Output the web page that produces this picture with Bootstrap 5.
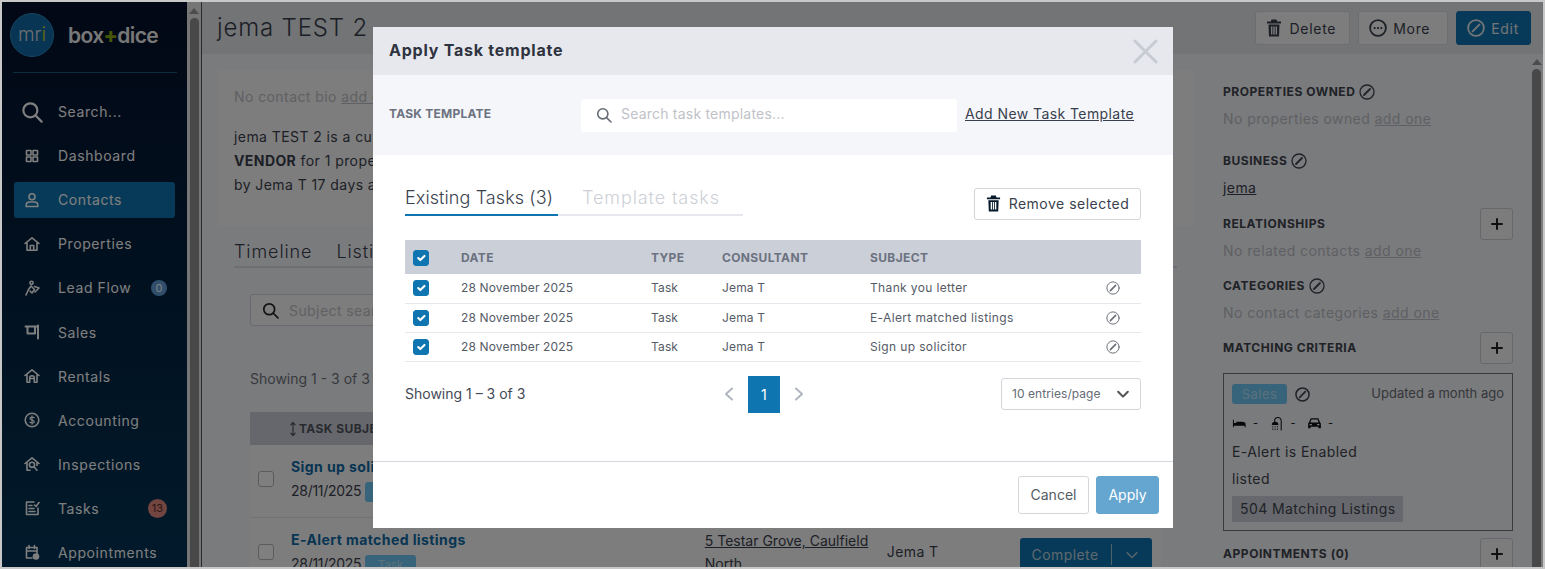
<!DOCTYPE html>
<html lang="en">
<head>
  <meta charset="UTF-8">
  <meta name="viewport" content="width=device-width, initial-scale=1.0">
  <title>Apply Task template</title>
  <link href="https://cdn.jsdelivr.net/npm/bootstrap@5.3.5/dist/css/bootstrap.min.css" rel="stylesheet">
  <script src="https://cdn.jsdelivr.net/npm/bootstrap@5.3.5/dist/js/bootstrap.bundle.min.js"></script>
  <style>
    html, body { height: 100%; overflow: hidden; }
    body { font-family: Inter, "Liberation Sans", sans-serif; font-size: 14px; color: #3a3f4e; letter-spacing: .03em; background: #f5f6fa; }
    a { color: inherit; }
    .ico { fill: none; stroke: currentColor; stroke-width: 1.6; stroke-linecap: round; stroke-linejoin: round; flex: none; }
    .ico-fill { fill: currentColor; stroke: none; }

    /* window frame stays bright over the backdrop */
    .win-frame { position: fixed; inset: 0; border: 2px solid #c8c8c8; z-index: 1060; pointer-events: none; }
    .app-shell { height: 100vh; padding: 2px; }

    /* sidebar */
    .side-bar { width: 185px; background: linear-gradient(#04102a, #023456); color: #fff; overflow: hidden; }
    .side-logo { height: 71px; margin: 0 10px 0 11px; padding-top: 11px; border-bottom: 1px solid #145a84; flex: none; }
    .mri-disc { width: 44px; height: 44px; margin-left: -3px; border-radius: 50%; background: #0f6ba6; border: 1px solid #2b88bd; color: #d8dfe4; font-size: 19px; font-weight: 300; letter-spacing: 0; line-height: 41px; text-align: center; }
    .mri-disc b { font-weight: 400; color: #a7c23a; }
    .word-mark { font-size: 21px; font-weight: 600; letter-spacing: -.03em; margin: 7px 0 0 14px; color: #f0f0f0; }
    .word-mark b { color: #8aa80f; font-weight: 800; }
    .side-nav { padding: 20.5px 12px 0; gap: 8px; flex-wrap: nowrap; }
    .side-link { height: 36.1px; padding: 0 8px 0 10px; border-radius: 3px; color: #fff; font-size: 14px; gap: 18px; letter-spacing: .043em; text-decoration: none; white-space: nowrap; }
    .side-link.is-current { background: #0f75b0; }
    .side-link .ico { width: 16px; height: 16px; }
    .side-link .ico-big { width: 22px; height: 22px; margin-left: -3px; margin-right: -3px; }
    .side-count { margin-left: auto; min-width: 16px; height: 16px; border-radius: 8px; background: #5f9fd8; font-size: 11px; line-height: 16px; text-align: center; letter-spacing: 0; }
    .side-count-red { background: #e58a80; min-width: 19px; height: 19px; border-radius: 10px; line-height: 19px; color: #5a2a2a; }

    /* fake scrollbars */
    .scroll-rail { background: #ececec; flex: none; align-items: center; }
    .scroll-rail i { display: block; width: 0; height: 0; border: 5px solid transparent; border-top: 0; border-bottom: 6px solid #999; }
    .scroll-rail u { display: block; flex: 1; width: 9px; background: #919191; border-radius: 5px 5px 0 0; text-decoration: none; }
    .rail-left { width: 15px; padding-top: 6px; gap: 4px; border-right: 1px solid #555; }
    .rail-right { width: 11px; padding-top: 5px; gap: 4px; background: #f5f6fa; align-items: flex-start; }

    /* main */
    .top-head { height: 52px; background: #e6e8ed; padding: 0 12px 0 15px; }
    .top-head h1 { font-size: 24px; font-weight: 300; margin: 0; letter-spacing: .035em; }
    .plain-btn { background: #fbfbfb; border: 1px solid #dcdde2; color: #3a3f4e; font-size: 14px; letter-spacing: .05em; height: 34px; padding: 0 13px 0 10px; border-radius: 3px; gap: 6px; }
    .plain-btn-wide { padding-right: 17px; }
    .trash-gap { gap: 8px; }
    .blue-btn { background: #0f75b0; border-color: #0f75b0; color: #e4e9ee; padding-right: 11px; }
    .body-split { height: 513px; overflow: hidden; }
    .left-col { width: 975px; margin: 16px 30px 0 16px; flex: none; }
    .right-col { width: 290px; margin-right: 19px; flex: none; padding-top: 30px; }

    .bio-box { height: 156px; background: #fbfbfb; padding: 15px 16px; line-height: 24px; }
    .bio-box p { margin: 0 0 16px; }
    .faint-txt { color: #bfc1c7; }
    .tab-line { margin: 12px 16px 0; height: 30px; border-bottom: 2px solid #dcdee4; font-size: 18px; font-weight: 300; letter-spacing: .05em; gap: 24px; }
    .search-strip { margin: 26px 32px 0; width: 400px; height: 32px; border: 1px solid #d3d5da; border-radius: 3px; padding: 0 11px; gap: 10px; color: #c0c2c8; background: #fbfbfb; }
    .count-txt { margin: 42px 32px 0; line-height: 22px; color: #70747e; letter-spacing: 0; }
    .task-grid { margin: 22px 32px 0 32px; }
    .task-head { height: 33px; background: #cbcfd8; font-size: 12px; font-weight: 700; color: #50555f; padding-left: 39px; gap: 2px; }
    .task-row { height: 72.5px; background: #fbfbfb; border-bottom: 1px solid #e4e5ea; padding: 0 0 3px 8px; }
    .task-box { width: 16px; height: 16px; border: 1px solid #b5b7bd; border-radius: 3px; background: #fff; margin-right: 17px; flex: none; }
    .task-name { color: #0f6ba6; font-weight: 700; font-size: 14px; line-height: 24px; letter-spacing: .03em; }
    .task-tag { display: inline-block; width: 51px; text-align: center; background: #6ec8f5; color: #b6e2f8; border-radius: 3px; font-size: 12px; line-height: 20px; }
    .task-meta { line-height: 24px; letter-spacing: -.02em; }
    .task-addr { width: 182px; margin-left: 239px; line-height: 23px; letter-spacing: 0; text-decoration: underline; align-self: flex-start; padding-top: 11px; }
    .task-done { width: 132px; height: 34px; background: #0f75b0; border-radius: 3px; color: #bcd2de; margin: 6px 0 0 81px; font-size: 14px; }
    .task-done em { font-style: normal; flex: 1; text-align: center; border-right: 1px solid #9cc; }
    .task-done .ico { margin: 0 13px; width: 14px; height: 14px; }

    .side-head { font-size: 12px; font-weight: 700; color: #40444f; gap: 4px; line-height: 16px; letter-spacing: .045em; }
    .side-head .ico { width: 16px; height: 16px; stroke-width: 1.3; }
    .side-line { line-height: 20px; margin: 9px 0 0; letter-spacing: .03em; }
    .side-group { margin-bottom: 24px; }
    .side-group-biz { margin-bottom: 10px; }
    .side-group-cat { margin: 17px 0 9px; }
    .side-head-tight { margin-bottom: 1px; }
    .plus-btn { width: 33px; height: 32px; border: 1px solid #cfd1d7; border-radius: 3px; background: #f8f8fa; color: #222; padding: 0; flex: none; }
    .match-box { border: 1px solid #74767c; height: 158px; padding: 10px 8px 0 8px; margin: 9px 0 7px; color: #40444f; }
    .sale-tag { width: 55px; height: 20px; border-radius: 3px; background: #6ec8f5; color: #b6e2f8; text-align: center; font-size: 13px; line-height: 20px; }
    .upd-txt { font-size: 13px; color: #6b6e76; letter-spacing: 0; }
    .spec-row { gap: 6px; height: 20px; margin-top: 9px; color: #111; font-size: 11px; }
    .spec-row .ico { width: 15px; height: 15px; }
    .spec-row span { margin-right: 5px; }
    .match-count { width: 171px; height: 26px; background: #cfd1da; line-height: 26px; padding-left: 8px; white-space: nowrap; }

    /* dialog */
    .task-dialog { max-width: 800px; width: 800px; margin: 27px 0 0 373px; }
    .task-dialog .modal-content { border: 0; border-radius: 0; height: 501px; }
    .dlg-head { height: 48px; background: #e6e8ed; padding: 0 15px 0 16px; border: 0; border-radius: 0; }
    .dlg-head h5 { font-size: 16px; font-weight: 700; margin: 0; padding-bottom: 2px; color: #2f3340; letter-spacing: .048em; }
    .close-x { color: #c7cbd2; line-height: 0; }
    .dlg-band { height: 80px; background: #f5f6fa; padding: 0 16px; }
    .band-label { width: 192px; font-size: 12px; font-weight: 700; color: #6b7280; letter-spacing: .02em; padding-bottom: 2px; }
    .band-link { padding-bottom: 3px; }
    .band-search { width: 376px; height: 33px; margin-right: 8px; }
    .band-search .input-group-text { background: #fff; border: 0; padding: 0 6px 0 15px; color: #666b75; border-radius: 3px 0 0 3px; }
    .band-search .form-control { border: 0; font-size: 14px; padding: 0 4px 3px; border-radius: 0 3px 3px 0; font-family: inherit; letter-spacing: .015em; }
    .band-search .form-control::placeholder { color: #bfc2c9; }
    .dlg-main { height: 306px; padding: 32px 32px 0; }
    .dlg-tabs { width: 338px; border-bottom: 2px solid #e6e8ed; flex-wrap: nowrap; }
    .dlg-tabs .nav-link { padding: 0 5px 5px 0; margin-bottom: -2px; border-radius: 0; font-size: 18px; line-height: 22px; color: #cdd0d7; font-weight: 300; letter-spacing: .05em; white-space: nowrap; border-bottom: 2px solid transparent; }
    .dlg-tabs .nav-link.active { color: #3a3f4e; border-bottom-color: #0f75b0; margin-right: 24px; letter-spacing: .005em; }
    .rm-btn { width: 167px; height: 32px; margin-top: 1px; background: #fff; border: 1px solid #d4d6db; border-radius: 3px; font-size: 14px; letter-spacing: .035em; color: #3a3f4e; gap: 8px; padding: 0 0 2px; }
    .rm-btn .ico { width: 15px; height: 17px; color: #071a2c; }
    .dlg-table { margin: 20px 0 0; table-layout: fixed; width: 736px; }
    .dlg-table th, .dlg-table td { padding: 0; vertical-align: middle; border-color: #e6e8ed; white-space: nowrap; box-shadow: none; }
    .dlg-table thead th { height: 34px; padding-top: 1px; background: #cbcfd8; font-size: 12px; font-weight: 700; color: #6b7280; border: 0; letter-spacing: .03em; }
    .dlg-table td { height: 29px; font-size: 12px; color: #555b66; letter-spacing: .012em; }
    .dlg-table .c-box { width: 56px; padding-left: 8px; }
    .dlg-table .c-date { width: 190px; }
    .dlg-table .c-type { width: 71px; }
    .dlg-table .c-who { width: 148px; }
    .dlg-table .c-subj { width: 223px; }
    .dlg-table td.c-subj { letter-spacing: .03em; }
    .dlg-table .c-act { padding-left: 13px; }
    .dlg-table .form-check-input { width: 16px; height: 16px; margin: 0; display: block; border-radius: 3px; background-color: #0f75b0; border-color: #0f75b0; }
    .dlg-table td .ico { width: 14px; height: 14px; stroke-width: 1.1; color: #666b75; display: block; }
    .pager-row { margin-top: 14px; height: 37px; }
    .pager-row .show-txt { width: 312px; line-height: 20px; color: #444956; letter-spacing: 0; }
    .pager-row .pagination { margin: 0; width: 284px; align-items: center; }
    .pager-row .page-link { border: 0; background: transparent; padding: 0; color: #b0b5bf; width: 32px; height: 37px; display: flex; align-items: center; justify-content: center; font-size: 14px; }
    .pager-row .page-item.active .page-link { background: #0f75b0; color: #fff; border-radius: 0; }
    .pager-row .page-item:first-child .page-link { width: 30px; padding-right: 4px; margin-left: -1px; margin-right: 1px; }
    .pager-row .page-item:last-child .page-link { padding-left: 4px; }
    .pager-row .page-item { margin-right: 2px; }
    .per-page { width: 140px; height: 32px; background: #fff; border: 1px solid #d4d6db; border-radius: 3px; font-size: 12px; letter-spacing: .005em; color: #666b75; padding: 0 10px; }
    .per-page .ico { width: 14px; height: 14px; color: #555; stroke-width: 2.4; }
    .dlg-foot { height: 67px; border-top: 1px solid #d5d7df; padding: 0 14px; gap: 7px; border-radius: 0; }
    .dlg-foot .btn { height: 38px; margin: 0; font-size: 14px; border-radius: 3px; padding: 0 0 2px; }
    .btn-off { width: 71px; background: #fff; border: 1px solid #d4d6db; color: #555b66; }
    .btn-go { width: 63px; background: #64a6d0; border: 1px solid #64a6d0; color: #fff; }
  </style>
</head>
<body>

  <svg width="0" height="0" class="d-block position-absolute">
    <defs>
      <symbol id="i-search" viewBox="0 0 16 16"><circle cx="6.8" cy="6.8" r="5.1"/><path d="M10.6 10.6 15 15"/></symbol>
      <symbol id="i-grid" viewBox="0 0 16 16"><path d="M2.5 2.5h4.5v4.5H2.5zM9 2.5h4.5v4.5H9zM2.5 9h4.5v4.5H2.5zM9 9h4.5v4.5H9z"/></symbol>
      <symbol id="i-user" viewBox="0 0 16 16"><circle cx="8" cy="4.8" r="3"/><path d="M2.2 14.5v-1.2c0-2 1.5-3.3 3.4-3.3h4.8c1.9 0 3.4 1.3 3.4 3.3v1.2z"/></symbol>
      <symbol id="i-home" viewBox="0 0 16 16"><path d="M1 7.5 8 1.8l7 5.7M3 6.5v7.7h10V6.5M6.3 14.2V9.5h3.4v4.7"/></symbol>
      <symbol id="i-flow" viewBox="0 0 16 16"><circle cx="7.5" cy="2.8" r="1.6"/><path d="M7 6 4.5 9.5 2 15M7 6l3.5 3.5L8 13l-2-2M10.5 6.5 15 8l-4 4"/></symbol>
      <symbol id="i-sale" viewBox="0 0 16 16"><path d="M14 1.5v13M1.5 2.5H14M3.5 3v6.5H11V3" stroke-width="2"/></symbol>
      <symbol id="i-rent" viewBox="0 0 16 16"><path d="M1 7.5 8 1.8l7 5.7M3 6.5v7.7h2.7V10a2.3 2.3 0 0 1 4.6 0v4.2H13V6.5M6 10.5h4"/></symbol>
      <symbol id="i-money" viewBox="0 0 16 16"><circle cx="8" cy="8" r="6.8"/><path d="M10.2 5.7C9.6 4.9 6 4.5 6 6.4c0 2 4.3 1.2 4.3 3.3 0 1.8-3.6 1.4-4.4.5M8 3.8v8.4" stroke-width="1.2"/></symbol>
      <symbol id="i-insp" viewBox="0 0 16 16"><path d="M1 7.5 8 1.8l7 5.7M3 6.5v7.7h3M13 6.5v3"/><circle cx="8" cy="8.8" r="2.6"/><path d="m10 10.8 3 3.4"/></symbol>
      <symbol id="i-task" viewBox="0 0 16 16"><path d="M10 2H2.5v12.5H14V8M5 5.5h3M5 8.5h5M5 11.5h6M10.5 5l1.5 1.5L15 2.5"/></symbol>
      <symbol id="i-cal" viewBox="0 0 16 16"><path d="M2.5 3.5h10.5v6M8 14H2.5V3.5M5 1.5v3M10.5 1.5v3M2.5 7H13"/><circle class="ico-fill" cx="12" cy="12.5" r="3.3"/></symbol>
      <symbol id="i-trash" viewBox="0 0 16 18"><path class="ico-fill" d="M5.5 0.5h5L11.2 2.5H15V4.5H1V2.5H4.8zM2.5 5.5H13.5L13 17.5H3zM5 7.5v8h1.4v-8zM7.3 7.5v8h1.4v-8zM9.6 7.5v8H11v-8z" fill-rule="evenodd"/></symbol>
      <symbol id="i-more" viewBox="0 0 16 16"><circle cx="8" cy="8" r="7"/><path d="M5 8h.01M8 8h.01M11 8h.01" stroke-width="2"/></symbol>
      <symbol id="i-edit" viewBox="0 0 16 16"><circle cx="8" cy="8" r="7"/><path d="M5 11 11 5" stroke-width="1.8"/></symbol>
      <symbol id="i-plus" viewBox="0 0 16 16"><path d="M8 3v10M3 8h10" stroke-width="2"/></symbol>
      <symbol id="i-down" viewBox="0 0 16 16"><path d="m2.5 5.5 5.5 5.5 5.5-5.5"/></symbol>
      <symbol id="i-left" viewBox="0 0 16 16"><path d="M11 2.5 5 8l6 5.5" stroke-width="2"/></symbol>
      <symbol id="i-right" viewBox="0 0 16 16"><path d="m5 2.5 6 5.5-6 5.5" stroke-width="2"/></symbol>
      <symbol id="i-sort" viewBox="0 0 8 16"><path d="M4 1.5v13M1.8 3.8 4 1.5l2.2 2.3M1.8 12.2 4 14.5l2.2-2.3" stroke-width="1.2"/></symbol>
      <symbol id="i-bed" viewBox="0 0 16 16"><path class="ico-fill" d="M1 4h1v3.5h2.5V6h6c2 0 4 .8 4 2.5V12h-1v-1.5H2V12H1z"/></symbol>
      <symbol id="i-shower" viewBox="0 0 16 16"><path d="M13 15V5a3.5 3.5 0 0 0-7 0v1" stroke-width="1.1"/><path class="ico-fill" d="M3 9.5a3.5 3.5 0 0 1 7 0z"/><path d="M4 11.5h.01M6.5 11.5h.01M9 11.5h.01M4 14h.01M6.5 14h.01M9 14h.01" stroke-width="1.3"/></symbol>
      <symbol id="i-car" viewBox="0 0 16 16"><path class="ico-fill" d="M4 2.5h8l2 4.5.8 1v5h-2.6v-1.5H3.8V13H1.2V8l.8-1zM4.8 3.8 3.6 6.8h8.8l-1.2-3zM2.8 8.4v1.4h2.4V8.4zM10.8 8.4v1.4h2.4V8.4z" fill-rule="evenodd"/></symbol>
    </defs>
  </svg>

  <div class="app-shell d-flex">
    <aside class="side-bar d-flex flex-column flex-shrink-0">
      <div class="side-logo d-flex align-items-start">
        <div class="mri-disc">mr<b>i</b></div>
        <div class="word-mark">box<b>+</b>dice</div>
      </div>
      <nav class="side-nav nav flex-column">
        <a class="side-link d-flex align-items-center" href="#"><svg class="ico ico-big"><use href="#i-search"/></svg>Search...</a>
        <a class="side-link d-flex align-items-center" href="#"><svg class="ico"><use href="#i-grid"/></svg>Dashboard</a>
        <a class="side-link d-flex align-items-center is-current" href="#"><svg class="ico"><use href="#i-user"/></svg>Contacts</a>
        <a class="side-link d-flex align-items-center" href="#"><svg class="ico"><use href="#i-home"/></svg>Properties</a>
        <a class="side-link d-flex align-items-center" href="#"><svg class="ico"><use href="#i-flow"/></svg>Lead Flow<span class="side-count">0</span></a>
        <a class="side-link d-flex align-items-center" href="#"><svg class="ico"><use href="#i-sale"/></svg>Sales</a>
        <a class="side-link d-flex align-items-center" href="#"><svg class="ico"><use href="#i-rent"/></svg>Rentals</a>
        <a class="side-link d-flex align-items-center" href="#"><svg class="ico"><use href="#i-money"/></svg>Accounting</a>
        <a class="side-link d-flex align-items-center" href="#"><svg class="ico"><use href="#i-insp"/></svg>Inspections</a>
        <a class="side-link d-flex align-items-center" href="#"><svg class="ico"><use href="#i-task"/></svg>Tasks<span class="side-count side-count-red">13</span></a>
        <a class="side-link d-flex align-items-center" href="#"><svg class="ico"><use href="#i-cal"/></svg>Appointments</a>
      </nav>
    </aside>
    <div class="scroll-rail rail-left d-flex flex-column"><i></i><u></u></div>

    <main class="flex-grow-1 d-flex flex-column">
      <header class="top-head d-flex align-items-center justify-content-between flex-shrink-0">
        <h1>jema TEST 2</h1>
        <div class="d-flex gap-2">
          <button class="btn plain-btn trash-gap d-flex align-items-center" type="button"><svg class="ico" width="16" height="18"><use href="#i-trash"/></svg>Delete</button>
          <button class="btn plain-btn plain-btn-wide d-flex align-items-center" type="button"><svg class="ico" width="18" height="18"><use href="#i-more"/></svg>More</button>
          <button class="btn plain-btn blue-btn d-flex align-items-center" type="button"><svg class="ico" width="18" height="18"><use href="#i-edit"/></svg>Edit</button>
        </div>
      </header>

      <div class="body-split d-flex">
        <section class="left-col">
          <div class="bio-box">
            <p class="faint-txt">No contact bio <a href="#">add one</a></p>
            jema TEST 2 is a current contact<br>
            <b>VENDOR</b> for 1 property<br>
            by Jema T 17 days ago
          </div>
          <div class="tab-line d-flex"><span>Timeline</span><span>Listings</span></div>
          <div class="search-strip d-flex align-items-center"><svg class="ico text-dark" width="17" height="17"><use href="#i-search"/></svg>Subject search</div>
          <div class="count-txt">Showing 1 - 3 of 3</div>
          <div class="task-grid">
            <div class="task-head d-flex align-items-center"><svg class="ico" width="8" height="16"><use href="#i-sort"/></svg>TASK SUBJECT</div>
            <div class="task-row d-flex align-items-center">
              <span class="task-box"></span>
              <div class="task-meta"><div class="task-name">Sign up solicitor</div>28/11/2025 <span class="task-tag">Task</span></div>
            </div>
            <div class="task-row d-flex align-items-center">
              <span class="task-box"></span>
              <div class="task-meta"><div class="task-name">E-Alert matched listings</div>28/11/2025 <span class="task-tag">Task</span></div>
              <div class="task-addr">5 Testar Grove, Caulfield North</div>
              <div>Jema T</div>
              <div class="task-done d-flex align-items-center"><em>Complete</em><svg class="ico"><use href="#i-down"/></svg></div>
            </div>
          </div>
        </section>

        <section class="right-col">
          <div class="side-group">
            <div class="side-head d-flex align-items-center">PROPERTIES OWNED <svg class="ico"><use href="#i-edit"/></svg></div>
            <p class="side-line faint-txt">No properties owned <a href="#">add one</a></p>
          </div>
          <div class="side-group-biz">
            <div class="side-head d-flex align-items-center">BUSINESS <svg class="ico"><use href="#i-edit"/></svg></div>
            <p class="side-line"><a href="#">jema</a></p>
          </div>
          <div class="side-head side-head-tight d-flex align-items-center justify-content-between">RELATIONSHIPS <button class="plus-btn d-flex align-items-center justify-content-center" type="button"><svg class="ico"><use href="#i-plus"/></svg></button></div>
          <p class="side-line faint-txt mt-0">No related contacts <a href="#">add one</a></p>
          <div class="side-group-cat">
            <div class="side-head d-flex align-items-center">CATEGORIES <svg class="ico"><use href="#i-edit"/></svg></div>
            <p class="side-line faint-txt">No contact categories <a href="#">add one</a></p>
          </div>
          <div class="side-head d-flex align-items-center justify-content-between">MATCHING CRITERIA <button class="plus-btn d-flex align-items-center justify-content-center" type="button"><svg class="ico"><use href="#i-plus"/></svg></button></div>
          <div class="match-box">
            <div class="d-flex align-items-center">
              <div class="sale-tag">Sales</div>
              <svg class="ico ms-2" width="15" height="15"><use href="#i-edit"/></svg>
              <span class="upd-txt ms-auto">Updated a month ago</span>
            </div>
            <div class="spec-row d-flex align-items-center"><svg class="ico"><use href="#i-bed"/></svg><span>-</span><svg class="ico"><use href="#i-shower"/></svg><span>-</span><svg class="ico"><use href="#i-car"/></svg><span>-</span></div>
            <div class="mt-2 lh-base">E-Alert is Enabled</div>
            <div class="mt-2 lh-sm">listed</div>
            <div class="match-count mt-2">504 Matching Listings</div>
          </div>
          <div class="side-head d-flex align-items-center justify-content-between">APPOINTMENTS (0) <button class="plus-btn d-flex align-items-center justify-content-center" type="button"><svg class="ico"><use href="#i-plus"/></svg></button></div>
        </section>
        <div class="scroll-rail rail-right d-flex flex-column"><i></i><u></u></div>
      </div>
    </main>
  </div>

  <div class="modal-backdrop show"></div>
  <div class="modal show d-block" tabindex="-1" role="dialog">
    <div class="modal-dialog task-dialog">
      <div class="modal-content">
        <div class="modal-header dlg-head d-flex align-items-center justify-content-between">
          <h5 class="modal-title">Apply Task template</h5>
          <button class="btn p-0 border-0 close-x" type="button" aria-label="Close">
            <svg width="25" height="25" viewBox="0 0 26 26" fill="none" stroke="currentColor" stroke-width="3" stroke-linecap="round"><path d="M2 2l22 22M24 2 2 24"/></svg>
          </button>
        </div>
        <div class="dlg-band d-flex align-items-center">
          <div class="band-label">TASK TEMPLATE</div>
          <div class="input-group band-search">
            <span class="input-group-text"><svg class="ico" width="16" height="16"><use href="#i-search"/></svg></span>
            <input class="form-control" type="text" placeholder="Search task templates...">
          </div>
          <a class="band-link" href="#">Add New Task Template</a>
        </div>
        <div class="dlg-main">
          <div class="d-flex justify-content-between align-items-start">
            <ul class="nav dlg-tabs">
              <li class="nav-item"><a class="nav-link active" href="#">Existing Tasks (3)</a></li>
              <li class="nav-item"><a class="nav-link" href="#">Template tasks</a></li>
            </ul>
            <button class="btn rm-btn d-flex align-items-center justify-content-center" type="button"><svg class="ico"><use href="#i-trash"/></svg>Remove selected</button>
          </div>
          <table class="table dlg-table">
            <thead>
              <tr>
                <th class="c-box"><input class="form-check-input" type="checkbox" checked aria-label="All"></th>
                <th class="c-date">DATE</th>
                <th class="c-type">TYPE</th>
                <th class="c-who">CONSULTANT</th>
                <th class="c-subj">SUBJECT</th>
                <th></th>
              </tr>
            </thead>
            <tbody>
              <tr>
                <td class="c-box"><input class="form-check-input" type="checkbox" checked aria-label="Select"></td>
                <td>28 November 2025</td><td>Task</td><td>Jema T</td><td class="c-subj">Thank you letter</td>
                <td class="c-act"><svg class="ico"><use href="#i-edit"/></svg></td>
              </tr>
              <tr>
                <td class="c-box"><input class="form-check-input" type="checkbox" checked aria-label="Select"></td>
                <td>28 November 2025</td><td>Task</td><td>Jema T</td><td class="c-subj">E-Alert matched listings</td>
                <td class="c-act"><svg class="ico"><use href="#i-edit"/></svg></td>
              </tr>
              <tr>
                <td class="c-box"><input class="form-check-input" type="checkbox" checked aria-label="Select"></td>
                <td>28 November 2025</td><td>Task</td><td>Jema T</td><td class="c-subj">Sign up solicitor</td>
                <td class="c-act"><svg class="ico"><use href="#i-edit"/></svg></td>
              </tr>
            </tbody>
          </table>
          <div class="pager-row d-flex align-items-center">
            <div class="show-txt">Showing 1 – 3 of 3</div>
            <ul class="pagination">
              <li class="page-item"><a class="page-link" href="#" aria-label="Previous"><svg class="ico" width="16" height="16"><use href="#i-left"/></svg></a></li>
              <li class="page-item active"><a class="page-link" href="#">1</a></li>
              <li class="page-item"><a class="page-link" href="#" aria-label="Next"><svg class="ico" width="16" height="16"><use href="#i-right"/></svg></a></li>
            </ul>
            <div class="per-page d-flex align-items-center justify-content-between">10 entries/page <svg class="ico"><use href="#i-down"/></svg></div>
          </div>
        </div>
        <div class="modal-footer dlg-foot">
          <button class="btn btn-off" type="button">Cancel</button>
          <button class="btn btn-go" type="button">Apply</button>
        </div>
      </div>
    </div>
  </div>

  <div class="win-frame"></div>
</body>
</html>
